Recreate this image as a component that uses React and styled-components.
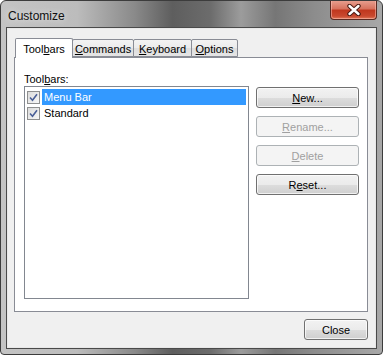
import React from 'react';
import styled, { createGlobalStyle } from 'styled-components';

const GlobalStyle = createGlobalStyle`
    html, body {
        margin: 0;
        padding: 0;
        background: #ffffff;
    }
    body {
        font-family: "Liberation Sans", Arial, sans-serif;
        font-size: 11px;
        color: #000;
    }
`;

const Window = styled.div`
    width: 383px;
    height: 355px;
    box-sizing: border-box;
    display: flex;
    flex-direction: column;
    border: 1px solid #3c3c3c;
    border-radius: 6px 6px 4px 4px;
    background: linear-gradient(90deg, #c4c4c4 0%, #bcbcbc 20%, #8a8a8a 35%, #5e5e5e 45%, #6c6c6c 55%, #9c9c9c 63%, #767676 72%, #8c8c8c 82%, #a8a8a8 100%);
    overflow: hidden;
`;

const TitleBar = styled.div`
    height: 27px;
    display: flex;
    align-items: flex-start;
    justify-content: space-between;
    padding-left: 7px;
`;

const Title = styled.div`
    font-size: 12px;
    line-height: 12px;
    padding-top: 9px;
    color: #101010;
    text-shadow: 0 0 6px rgba(255, 255, 255, 0.8);
`;

const CloseX = styled.div`
    width: 47px;
    height: 20px;
    margin-right: 5px;
    margin-top: -1px;
    box-sizing: border-box;
    border: 1px solid #5a2a22;
    border-top: none;
    border-radius: 0 0 4px 4px;
    background: linear-gradient(180deg, #e9a293 0%, #d8735f 45%, #c0381f 55%, #c9492f 85%, #e07a5a 100%);
    display: flex;
    align-items: center;
    justify-content: center;
    box-shadow: inset 0 0 0 1px rgba(255, 200, 190, 0.5);
`;

const Frame = styled.div`
    flex: 1;
    margin: 0 6px 6px 6px;
    border: 1px solid #e8e8e8;
    outline: 1px solid #4a4a4a;
    display: flex;
`;

const Client = styled.div`
    flex: 1;
    background: #f0f0f0;
    padding: 8px 7px 7px 6px;
    display: flex;
    flex-direction: column;
`;

const TabStrip = styled.div`
    display: flex;
    align-items: flex-end;
    height: 20px;
`;

const Tab = styled.div`
    position: relative;
    z-index: ${p => (p.$active ? 2 : 1)};
    width: ${p => p.$w}px;
    height: ${p => (p.$active ? '20px' : '18px')};
    margin-bottom: ${p => (p.$active ? '-1px' : '0')};
    margin-left: -1px;
    box-sizing: border-box;
    border: 1px solid #898c95;
    border-bottom: ${p => (p.$active ? 'none' : '1px solid #898c95')};
    border-radius: 2px 2px 0 0;
    background: ${p => (p.$active ? '#ffffff' : 'linear-gradient(180deg, #f3f3f3 0%, #ebebeb 50%, #dedede 51%, #e5e5e5 100%)')};
    display: flex;
    align-items: center;
    justify-content: center;
    padding-top: ${p => (p.$active ? '0' : '1px')};
    &:first-child { margin-left: 1px; }
`;

const Panel = styled.div`
    flex: 1;
    background: #ffffff;
    border: 1px solid #898c95;
    padding: 11px 8px 12px 9px;
    display: flex;
    gap: 7px;
`;

const ListColumn = styled.div`
    display: flex;
    flex-direction: column;
    width: 225px;
`;

const Label = styled.div`
    height: 17px;
    box-sizing: border-box;
    padding-top: 4px;
    line-height: 12px;
`;

const ListBox = styled.div`
    flex: 1;
    border: 1px solid #828790;
    background: #fff;
    padding: 2px 1px 1px 2px;
`;

const Row = styled.div`
    height: 16px;
    display: flex;
    align-items: center;
`;

const Check = styled.div`
    width: 13px;
    height: 13px;
    box-sizing: border-box;
    border: 1px solid #8e8f8f;
    background: linear-gradient(135deg, #dcdcdc 0%, #f6f6f6 100%);
    display: flex;
    align-items: center;
    justify-content: center;
    margin-right: 2px;
`;

const RowText = styled.div`
    flex: 1;
    height: 16px;
    line-height: 16px;
    padding-left: 2px;
    margin-right: 1px;
    background: ${p => (p.$selected ? '#3399ff' : 'transparent')};
    color: ${p => (p.$selected ? '#fff' : '#000')};
`;

const ButtonColumn = styled.div`
    display: flex;
    flex-direction: column;
    gap: 8px;
    padding-top: 18px;
`;

const Button = styled.div`
    width: ${p => p.$width || '103px'};
    height: 21px;
    box-sizing: border-box;
    border: 1px solid ${p => (p.$disabled ? '#adb2b5' : '#707070')};
    border-radius: 3px;
    background: ${p => (p.$disabled
        ? '#f4f4f4'
        : 'linear-gradient(180deg, #f2f2f2 0%, #ebebeb 50%, #dddddd 51%, #cfcfcf 100%)')};
    color: ${p => (p.$disabled ? '#a0a0a0' : '#000')};
    box-shadow: ${p => (p.$disabled ? 'none' : 'inset 0 0 0 1px rgba(255,255,255,0.7)')};
    display: flex;
    align-items: center;
    justify-content: center;
`;

const Footer = styled.div`
    display: flex;
    justify-content: flex-end;
    padding-top: 7px;
`;

const CheckMark = () => (
    <svg width="9" height="9" viewBox="0 0 9 9">
        <path d="M1 4.5 L3.5 7.2 L8 1.2" fill="none" stroke="#4a5f97" strokeWidth="1.6" />
    </svg>
);

const XGlyph = () => (
    <svg width="14" height="12" viewBox="0 0 14 12">
        <path d="M2.5 2 L11.5 10 M11.5 2 L2.5 10" stroke="#4a1a12" strokeWidth="4.4" strokeLinecap="round" />
        <path d="M2.5 2 L11.5 10 M11.5 2 L2.5 10" stroke="#ffffff" strokeWidth="2.4" strokeLinecap="round" />
    </svg>
);

const App = () => {
    return (
        <>
            <GlobalStyle />
            <Window>
                <TitleBar>
                    <Title>Customize</Title>
                    <CloseX><XGlyph /></CloseX>
                </TitleBar>
                <Frame>
                    <Client>
                        <TabStrip>
                            <Tab $active $w={58}>Tool<u>b</u>ars</Tab>
                            <Tab $w={62}><u>C</u>ommands</Tab>
                            <Tab $w={59}><u>K</u>eyboard</Tab>
                            <Tab $w={47}><u>O</u>ptions</Tab>
                        </TabStrip>
                        <Panel>
                            <ListColumn>
                                <Label>Tool<u>b</u>ars:</Label>
                                <ListBox>
                                    <Row>
                                        <Check><CheckMark /></Check>
                                        <RowText $selected>Menu Bar</RowText>
                                    </Row>
                                    <Row>
                                        <Check><CheckMark /></Check>
                                        <RowText>Standard</RowText>
                                    </Row>
                                </ListBox>
                            </ListColumn>
                            <ButtonColumn>
                                <Button><u>N</u>ew...</Button>
                                <Button $disabled><u>R</u>ename...</Button>
                                <Button $disabled><u>D</u>elete</Button>
                                <Button>R<u>e</u>set...</Button>
                            </ButtonColumn>
                        </Panel>
                        <Footer>
                            <Button $width="64px">Close</Button>
                        </Footer>
                    </Client>
                </Frame>
            </Window>
        </>
    );
};

export default App;
